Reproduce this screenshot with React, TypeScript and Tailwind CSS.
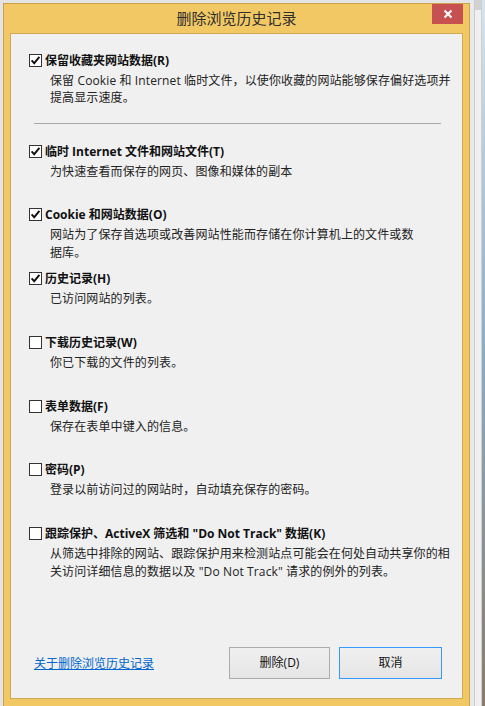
import React from "react";

type Row = { label: string; desc: string[]; checked: boolean };

const rows: Row[] = [
  { label: "临时 Internet 文件和网站文件(T)", desc: ["为快速查看而保存的网页、图像和媒体的副本"], checked: true },
  {
    label: "Cookie 和网站数据(O)",
    desc: ["网站为了保存首选项或改善网站性能而存储在你计算机上的文件或数", "据库。"],
    checked: true,
  },
  { label: "历史记录(H)", desc: ["已访问网站的列表。"], checked: true },
  { label: "下载历史记录(W)", desc: ["你已下载的文件的列表。"], checked: false },
  { label: "表单数据(F)", desc: ["保存在表单中键入的信息。"], checked: false },
  { label: "密码(P)", desc: ["登录以前访问过的网站时，自动填充保存的密码。"], checked: false },
  {
    label: '跟踪保护、ActiveX 筛选和 "Do Not Track" 数据(K)',
    desc: [
      "从筛选中排除的网站、跟踪保护用来检测站点可能会在何处自动共享你的相",
      '关访问详细信息的数据以及 "Do Not Track" 请求的例外的列表。',
    ],
    checked: false,
  },
];

function CheckBox({ checked }: { checked: boolean }) {
  return (
    <div className="w-[13px] h-[13px] shrink-0 border border-[#333333] bg-white flex items-center justify-center">
      {checked && (
        <svg width="11" height="11" viewBox="0 0 11 11">
          <path d="M1.6 5.4 L4.2 8.2 L9.4 1.8" fill="none" stroke="#111" strokeWidth="1.9" />
        </svg>
      )}
    </div>
  );
}

function Item({ row }: { row: Row }) {
  return (
    <div className="pl-[18px]">
      <div className="flex items-center h-[17px]">
        <CheckBox checked={row.checked} />
        <span className="ml-[3px] font-bold text-[12px] leading-[17px] text-[#111] whitespace-nowrap">{row.label}</span>
      </div>
      <div className="mt-[3px] pl-[21px] text-[12px] leading-[17.5px] tracking-[0.12px] text-[#222] whitespace-nowrap">
        {row.desc.map((d, i) => (
          <div key={i}>{d}</div>
        ))}
      </div>
    </div>
  );
}

export default function App() {
  return (
    <div className="w-[485px] h-[706px] overflow-hidden flex bg-[#e4e4e4] font-['Open_Sans','Noto_Sans_CJK_SC',sans-serif]">
      {/* dialog window */}
      <div className="ml-[3px] mt-[3px] w-[467px] h-[712px] shrink-0 border border-[#c9a24a] bg-[#f2c865] flex flex-col px-[6px]">
        {/* title bar */}
        <div className="grid grid-cols-[1fr_auto_1fr] h-[29px] shrink-0">
          <div />
          <div className="text-[15px] leading-[28px] text-[#2e2e2e] whitespace-nowrap">删除浏览历史记录</div>
          <div className="flex justify-end items-start">
            <div className="w-[31px] h-[20px] bg-[#c75050] flex items-center justify-center">
              <svg width="10" height="10" viewBox="0 0 10 10">
                <path d="M1.5 1.5 L8.5 8.5 M8.5 1.5 L1.5 8.5" stroke="#fff" strokeWidth="2" />
              </svg>
            </div>
          </div>
        </div>
        {/* client area */}
        <div className="h-[666px] shrink-0 border border-[#cfa955] bg-[#f0f0f0] flex flex-col pt-[17.5px]">
          <Item
            row={{
              label: "保留收藏夹网站数据(R)",
              desc: ["保留 Cookie 和 Internet 临时文件，以使你收藏的网站能够保存偏好选项并", "提高显示速度。"],
              checked: true,
            }}
          />
          <div className="mt-[16.5px] ml-[23px] w-[407px] h-px bg-[#a8a8a8]" />
          <div className="mt-[18.5px] flex flex-col">
            {rows.map((r, i) => (
              <div key={i} className="h-[63.75px]">
                <Item row={r} />
              </div>
            ))}
          </div>
          <div className="flex-1" />
          <div className="flex items-center pl-[23px] pr-[20px] pb-[19px]">
            <a className="text-[12px] leading-[17px] text-[#0066cc] underline whitespace-nowrap cursor-pointer">
              关于删除浏览历史记录
            </a>
            <div className="flex-1" />
            <button className="w-[101px] h-[32px] border border-[#acacac] bg-linear-to-b from-[#f0f0f0] to-[#e5e5e5] text-[12px] text-[#111]">
              删除(D)
            </button>
            <button className="ml-[9px] w-[103px] h-[32px] border border-[#3399ff] bg-linear-to-b from-[#f0f0f0] to-[#e5e5e5] text-[12px] text-[#111]">
              取消
            </button>
          </div>
        </div>
      </div>
      {/* background windows at the right */}
      <div className="flex flex-1 h-full">
        <div className="w-[4px] bg-[#e7e9eb]" />
        <div className="w-px bg-[#cbcbcb]" />
        <div className="w-[6px] flex flex-col">
          <div className="h-[10px] bg-[#d2d2d2]" />
          <div className="flex-1 bg-[#f0f0f0]" />
        </div>
        <div className="w-px bg-[#d0d0d0]" />
        <div className="flex-1 bg-linear-to-b from-[#d6e4ee] via-[#88acc9] to-[#8a7b68]" />
      </div>
    </div>
  );
}
